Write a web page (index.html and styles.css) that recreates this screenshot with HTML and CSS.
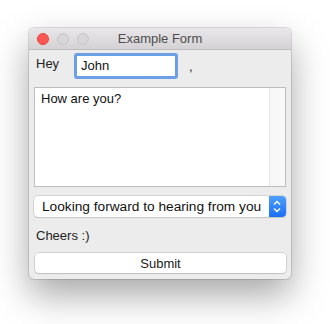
FILE: index.html
```html
<!DOCTYPE html>
<html lang="en">
<head>
  <meta charset="UTF-8" />
  <title>Example Form</title>
  <link rel="stylesheet" href="styles.css">
</head>
<body>
  <div class="window">
    <div class="titlebar">
      <div class="lights">
        <span class="light close"></span>
        <span class="light"></span>
        <span class="light"></span>
      </div>
      <div class="title">Example Form</div>
    </div>

    <div class="content">
      <!-- greeting row -->
      <div class="greet-row">
        <span class="hey">Hey</span>
        <div class="name-box">John</div>
        <span class="comma">,</span>
      </div>

      <div class="message">
        <div class="message-text">How are you?</div>
        <div class="scroll-track"></div>
      </div>

      <div class="select">
        <span class="select-text">Looking forward to hearing from you</span>
        <span class="select-arrows">
          <svg width="16" height="21" viewBox="0 0 16 21">
            <path d="M5 8.5 L8 5.5 L11 8.5" fill="none" stroke="#fff" stroke-width="1.4" />
            <path d="M5 12.5 L8 15.5 L11 12.5" fill="none" stroke="#fff" stroke-width="1.4" />
          </svg>
        </span>
      </div>

      <div class="cheers">Cheers :)</div>

      <button class="submit">Submit</button>
    </div>
  </div>
</body>
</html>
```

FILE: styles.css
```css
body {
  margin: 0;
  min-height: 324px;
  box-sizing: border-box;
  padding: 28px 0 0 29px;
  background: #fff;
  font-family: "Liberation Sans", Arial, sans-serif;
  font-size: 13px;
  color: #222;
}
.window {
  width: 262px;
  border-radius: 5px;
  background: #ececec;
  box-shadow: 0 0 0 1px rgba(0,0,0,0.12), 0 16px 36px rgba(0,0,0,0.35);
  overflow: hidden;
}
.titlebar {
  position: relative;
  height: 21px;
  background: linear-gradient(#e9e7e9, #d4d2d4);
  border-bottom: 1px solid #bdbdbd;
}
.lights {
  display: flex;
  gap: 8px;
  padding: 5px 0 0 8px;
}
.light {
  width: 12px;
  height: 12px;
  border-radius: 50%;
  box-sizing: border-box;
  background: #d8d6d8;
  border: 1px solid #c6c4c6;
}
.light.close {
  background: #fd5753;
  border-color: #e2463f;
}
.title {
  position: absolute;
  top: 0;
  left: 0;
  right: 0;
  line-height: 21px;
  text-align: center;
  color: #4d4d4d;
}
.content {
  padding: 3px 5px 6px 5px;
  display: flex;
  flex-direction: column;
}
.greet-row {
  display: flex;
  align-items: flex-start;
  height: 27px;
}
.hey {
  margin: 3px 0 0 2px;
  width: 38px;
}
.name-box {
  width: 104px;
  height: 26px;
  line-height: 20px;
  padding-left: 4px;
  box-sizing: border-box;
  background: #fff;
  border: 3px solid #6b9fe6;
  border-radius: 3px;
  color: #111;
}
.comma {
  margin: 6px 0 0 11px;
}
.message {
  display: flex;
  margin-top: 7px;
  height: 98px;
  border: 1px solid #bdbdbd;
  background: #fff;
}
.message-text {
  flex: 1;
  padding: 3px 0 0 6px;
  color: #111;
}
.scroll-track {
  width: 15px;
  background: #f8f8f8;
  border-left: 1px solid #e6e6e6;
}
.select {
  display: flex;
  margin-top: 9px;
  height: 21px;
  border-radius: 4px;
  background: #fff;
  box-shadow: 0 0 0 0.5px #bdbdbd, 0 1px 1px rgba(0,0,0,0.12);
  overflow: hidden;
}
.select-text {
  flex: 1;
  padding-left: 8px;
  line-height: 21px;
  font-size: 13.7px;
  color: #111;
}
.select-arrows {
  width: 17px;
  background: linear-gradient(#4fa0fb, #1a6ff5);
}
.select-arrows svg {
  display: block;
}
.cheers {
  margin: 11px 0 0 2px;
  height: 16px;
}
.submit {
  margin: 9px 0 0 1px;
  height: 20px;
  padding: 0;
  font-family: inherit;
  font-size: 13px;
  color: #222;
  background: #fff;
  border: none;
  border-radius: 4px;
  box-shadow: 0 0 0 0.5px #b8b8b8, 0 1px 1px rgba(0,0,0,0.15);
}
```
